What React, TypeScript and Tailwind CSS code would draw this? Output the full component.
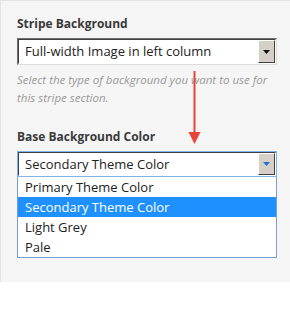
const font = "font-['Segoe_UI','Open_Sans',sans-serif]";

function Arrow({ blue }: { blue?: boolean }) {
  return (
    <div className="w-[17px] self-stretch bg-[#d4d0c8] border-t border-l border-t-white border-l-white border-r border-b border-r-[#404040] border-b-[#404040] flex items-center justify-center">
      <svg width="7" height="4" viewBox="0 0 7 4">
        <path d="M0 0h7L3.5 4z" fill={blue ? "#1f6fd0" : "#111"} />
      </svg>
    </div>
  );
}

const options = ["Primary Theme Color", "Secondary Theme Color", "Light Grey", "Pale"];

export default function App() {
  return (
    <div className={`w-[290px] h-[310px] bg-white ${font}`}>
      <div className="relative h-[282px] bg-[#f5f5f5] border-t border-l border-[#e2e2e2] pl-4 pr-[13px] pt-[14px]">
        {/* Stripe background */}
        <div className="text-[12px] font-bold text-[#3a3a3a] leading-[18px]">Stripe Background</div>
        <div className="mt-[5px] h-[27px] flex border border-t-[#6e6e6e] border-l-[#6e6e6e] border-b-[#dcdcdc] border-r-[#dcdcdc]">
          <div className="flex-1 flex border border-t-[#404040] border-l-[#404040] border-b-white border-r-white bg-white">
            <div className="flex-1 pl-[6px] text-[13px] leading-[23px] text-[#222]">Full-width Image in left column</div>
            <Arrow />
          </div>
        </div>
        <p className="mt-[6px] text-[11.5px] italic text-[#9a9a9a] leading-[18px] whitespace-nowrap">
          Select the type of background you want to use for
          <br />
          this stripe section.
        </p>

        {/* Base background color */}
        <div className="mt-[21px] text-[12px] font-bold text-[#3a3a3a] leading-[18px]">Base Background Color</div>
        <div className="mt-[5px] h-[26px] flex border border-[#7eb4ea]">
          <div className="flex-1 flex border border-t-[#404040] border-l-[#404040] border-b-white border-r-white bg-white">
            <div className="flex-1 pl-[6px] text-[13px] leading-[22px] text-[#222]">Secondary Theme Color</div>
            <Arrow blue />
          </div>
        </div>
        <div className="border border-t-0 border-[#7a9cd3] bg-white">
          {options.map((o) => (
            <div
              key={o}
              className={
                o === "Secondary Theme Color"
                  ? "h-5 pl-[7px] text-[13px] leading-5 bg-[#1e90ff] text-white"
                  : "h-5 pl-[7px] text-[13px] leading-5 text-[#222]"
              }
            >
              {o}
            </div>
          ))}
        </div>

        {/* red pointer arrow */}
        <svg className="absolute left-[187px] top-[70px]" width="13" height="73" viewBox="0 0 13 73">
          <rect x="5.5" y="0" width="2" height="62" fill="#e8453c" />
          <path d="M0.5 61h12L6.5 73z" fill="#e8453c" />
        </svg>
      </div>
    </div>
  );
}
